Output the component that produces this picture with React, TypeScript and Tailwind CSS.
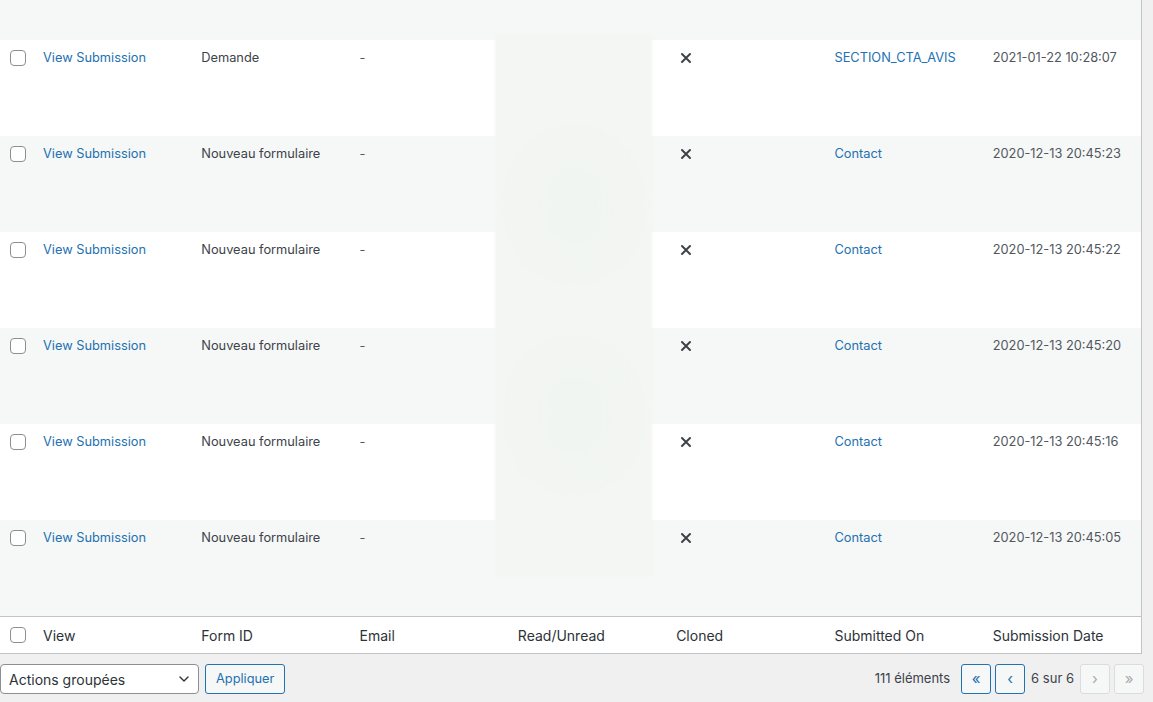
import { ChevronDown } from "lucide-react";

const rows = [
  { form: "Demande", source: "SECTION_CTA_AVIS", date: "2021-01-22 10:28:07" },
  { form: "Nouveau formulaire", source: "Contact", date: "2020-12-13 20:45:23" },
  { form: "Nouveau formulaire", source: "Contact", date: "2020-12-13 20:45:22" },
  { form: "Nouveau formulaire", source: "Contact", date: "2020-12-13 20:45:20" },
  { form: "Nouveau formulaire", source: "Contact", date: "2020-12-13 20:45:16" },
  { form: "Nouveau formulaire", source: "Contact", date: "2020-12-13 20:45:05" },
];

const columns = [
  "View",
  "Form ID",
  "Email",
  "Read/Unread",
  "Cloned",
  "Submitted On",
  "Submission Date",
];

function Checkbox() {
  return (
    <span className="block h-4 w-4 rounded-[4px] border border-[#8c8f94] bg-white" />
  );
}

function CrossMark() {
  return (
    <svg width="12" height="12" viewBox="0 0 12 12" className="text-[#3c434a]">
      <path
        d="M2 2 L10 10 M10 2 L2 10"
        stroke="currentColor"
        strokeWidth="2"
        strokeLinecap="round"
      />
    </svg>
  );
}

export default function App() {
  return (
    <div className="h-[702px] overflow-hidden bg-[#f0f0f1] font-['Inter','Liberation_Sans',sans-serif] text-[12.8px]">
      <div className="relative mr-[11px] border-r border-[#c3c4c7]">
        <div className="h-[40px] bg-[#f6f7f7]" />

        {rows.map((row, i) => (
          <div
            key={i}
            className={`grid h-[96px] grid-cols-[33px_repeat(7,1fr)] leading-[19px] ${
              i % 2 === 0 ? "bg-white" : "bg-[#f6f7f7]"
            }`}
          >
            <div className="pl-[10px] pt-[10px]">
              <Checkbox />
            </div>
            <div className="px-[10px] py-[8px] text-[#2271b1]">View Submission</div>
            <div className="px-[10px] py-[8px] text-[#3c434a]">{row.form}</div>
            <div className="px-[10px] py-[8px] text-[#50575e]">-</div>
            <div className="px-[10px] py-[8px]" />
            <div className="flex px-[10px] pt-[12px] pl-[14px]">
              <CrossMark />
            </div>
            <div className="px-[10px] py-[8px] text-[#2271b1]">{row.source}</div>
            <div className="px-[10px] py-[8px] text-[#50575e]">{row.date}</div>
          </div>
        ))}

        {/* blurred redaction over the read/unread column */}
        <div className="pointer-events-none absolute left-[495px] top-[35px] h-[541px] w-[157px] bg-[#f3f6f3] blur-[1px]">
          <div className="mx-auto mt-[110px] h-[120px] w-[100px] rounded-full bg-[#f1f5f2] blur-md" />
          <div className="mx-auto mt-[90px] h-[120px] w-[100px] rounded-full bg-[#f1f5f2] blur-md" />
        </div>

        <div className="grid h-[38px] grid-cols-[33px_repeat(7,1fr)] items-center border-y border-[#c3c4c7] bg-white text-[14px] text-[#2c3338]">
          <div className="pl-[10px]">
            <Checkbox />
          </div>
          {columns.map((c) => (
            <div key={c} className="px-[10px]">
              {c}
            </div>
          ))}
        </div>
      </div>

      <div className="flex h-[48px] items-center justify-between pr-[9px] pt-[2px]">
        <div className="flex items-center gap-[6px]">
          <div className="flex h-[30px] w-[199px] items-center justify-between rounded-[4px] border border-[#8c8f94] bg-white pl-[8px] pr-[6px] text-[14px] text-[#2c3338]">
            <span>Actions groupées</span>
            <ChevronDown size={16} strokeWidth={2} className="text-[#2c3338]" />
          </div>
          <button className="h-[30px] rounded-[3px] border border-[#2271b1] bg-[#f6f7f7] px-[10px] text-[12.8px] text-[#2271b1]">
            Appliquer
          </button>
        </div>
        <div className="flex items-center text-[13px] text-[#3c434a]">
          <span className="mr-[11px]">111 éléments</span>
          <span className="flex h-[30px] w-[30px] items-center justify-center rounded-[3px] border border-[#2271b1] bg-[#f6f7f7] text-[15px] text-[#2271b1]">
            «
          </span>
          <span className="ml-[4px] flex h-[30px] w-[30px] items-center justify-center rounded-[3px] border border-[#2271b1] bg-[#f6f7f7] text-[15px] text-[#2271b1]">
            ‹
          </span>
          <span className="mx-[6px]">6 sur 6</span>
          <span className="flex h-[30px] w-[30px] items-center justify-center rounded-[3px] border border-[#dcdcde] bg-[#f6f7f7] text-[15px] text-[#a7aaad]">
            ›
          </span>
          <span className="ml-[4px] flex h-[30px] w-[30px] items-center justify-center rounded-[3px] border border-[#dcdcde] bg-[#f6f7f7] text-[15px] text-[#a7aaad]">
            »
          </span>
        </div>
      </div>
    </div>
  );
}
